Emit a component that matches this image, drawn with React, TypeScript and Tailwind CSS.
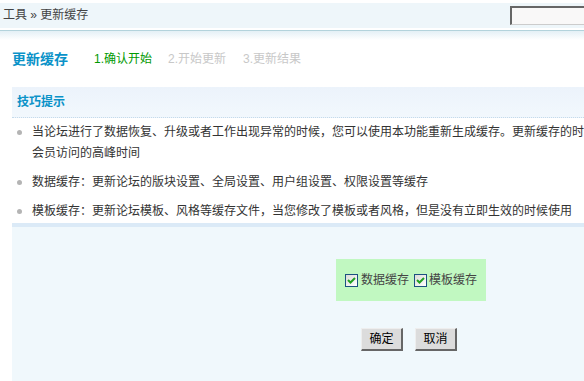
import { useState } from "react";

const tips: string[][] = [
  [
    "当论坛进行了数据恢复、升级或者工作出现异常的时候，您可以使用本功能重新生成缓存。更新缓存的时候，可能让服务器负载升高，请尽量避开",
    "会员访问的高峰时间",
  ],
  ["数据缓存：更新论坛的版块设置、全局设置、用户组设置、权限设置等缓存"],
  ["模板缓存：更新论坛模板、风格等缓存文件，当您修改了模板或者风格，但是没有立即生效的时候使用"],
];

// xp style checkbox
const CheckBox = ({ checked, onClick }: { checked: boolean; onClick: () => void }) => (
  <span
    onClick={onClick}
    className="inline-flex h-[13px] w-[13px] shrink-0 cursor-pointer items-center justify-center border border-[#1c5180] bg-gradient-to-br from-[#dcdcd7] to-[#ffffff]"
  >
    {checked && (
      <svg width="9" height="9" viewBox="0 0 9 9">
        <path d="M1 4 L3.5 6.5 L8 2" fill="none" stroke="#21a121" strokeWidth="2" />
      </svg>
    )}
  </span>
);

export default function App() {
  const [dataCache, setDataCache] = useState<boolean>(true);
  const [tplCache, setTplCache] = useState<boolean>(true);

  return (
    <div className="h-[381px] w-full overflow-hidden bg-white">
      <div
        className="w-[600px] text-[12px] text-[#333]"
        style={{ fontFamily: '"Liberation Sans", "Noto Sans CJK SC", sans-serif' }}
      >
        {/* breadcrumb bar */}
        <div className="pt-[3px]">
          <div className="flex h-[25px] items-start justify-between bg-[#eef6fa]">
            <div className="pl-[3px] leading-[25px] text-[#444]">工具 &raquo; 更新缓存</div>
            <input
              type="text"
              className="mt-[3px] h-[19px] w-[90px] shrink-0 border-b border-l-2 border-r border-t-2 border-b-[#ccc] border-l-[#666] border-r-[#ccc] border-t-[#666] bg-[#f9f8f8] outline-none"
            />
          </div>
          <div className="h-[2px] bg-white" />
          <div className="h-[1px] bg-[#b3d3dc]" />
          <div className="h-[9px] bg-gradient-to-b from-[#e4f0f6] to-white" />
        </div>

        {/* title + steps */}
        <div className="flex h-[47px] items-start pl-[12px] pt-[9px]">
          <h3 className="w-[82px] text-[14px] font-bold leading-[20px] text-[#0a92c8]">更新缓存</h3>
          <span className="w-[74px] leading-[20px] text-[#009900]">1.确认开始</span>
          <span className="w-[75px] leading-[20px] text-[#c8c8c8]">2.开始更新</span>
          <span className="leading-[20px] text-[#c8c8c8]">3.更新结果</span>
        </div>

        <div className="ml-[12px]">
          {/* tips */}
          <div className="h-[31px] border-b border-dotted border-b-[#c5dbeb] bg-gradient-to-b from-[#ecf3fb] to-[#f2f8fd] pl-[5px] font-bold leading-[30px] text-[#0a92c8]">
            技巧提示
          </div>
          <ul className="bg-white">
            {tips.map((lines, index) => (
              <li
                key={index}
                className={`flex items-start whitespace-nowrap pt-[4px] ${index === tips.length - 1 ? "pb-[1px]" : "pb-[4px]"}`}
              >
                <span className="ml-[5px] mr-[10px] mt-[8px] h-[5px] w-[5px] shrink-0 rounded-full bg-[#b4b4b4]" />
                <div className="leading-[21px]">
                  {lines.map((line, i) => (
                    <div key={i}>{line}</div>
                  ))}
                </div>
              </li>
            ))}
          </ul>
          <div className="h-[4px] bg-[#dbeaf7]" />

          {/* form */}
          <div className="h-[200px] bg-[#f0f8fc] pt-[32px]">
            <div className="ml-[324px] flex h-[42px] w-[150px] items-center bg-[#c1f8c1] pl-[9px] text-[#444]">
              <CheckBox checked={dataCache} onClick={() => setDataCache(!dataCache)} />
              <span className="ml-[3px]">数据缓存</span>
              <span className="ml-[5px]" />
              <CheckBox checked={tplCache} onClick={() => setTplCache(!tplCache)} />
              <span className="ml-[2px]">模板缓存</span>
            </div>
            <div className="ml-[349px] mt-[27px] flex gap-[12px]">
              <button className="h-[23px] w-[42px] border-b-2 border-l border-r-2 border-t border-b-[#666] border-l-[#eee] border-r-[#666] border-t-[#eee] bg-[#dcdcdc] text-[12px] text-black">
                确定
              </button>
              <button className="h-[23px] w-[42px] border-b-2 border-l border-r-2 border-t border-b-[#666] border-l-[#eee] border-r-[#666] border-t-[#eee] bg-[#dcdcdc] text-[12px] text-black">
                取消
              </button>
            </div>
          </div>
        </div>
      </div>
    </div>
  );
}
